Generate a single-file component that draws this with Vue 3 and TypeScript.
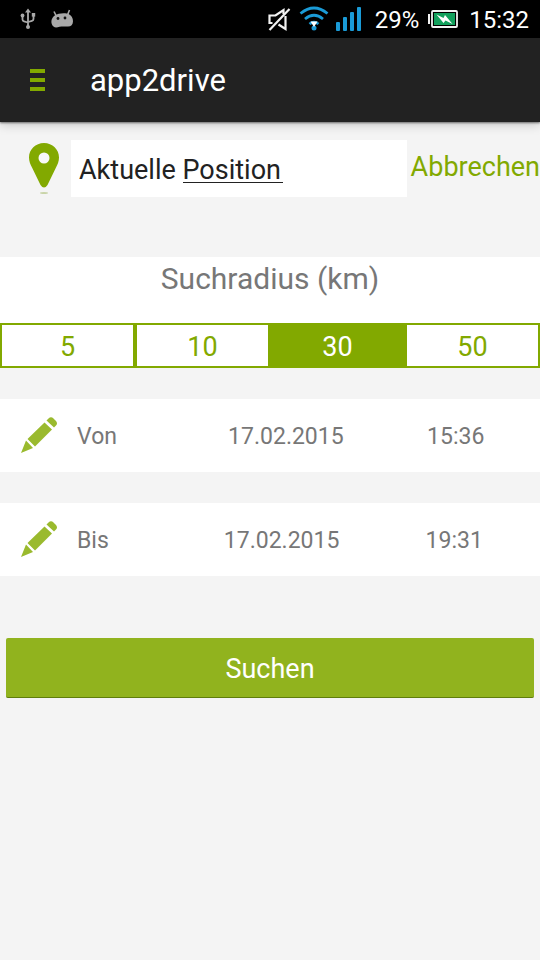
<script setup lang="ts">
import { ref } from 'vue'

interface Period {
  label: string
  date: string
  time: string
}

const address = ref('Aktuelle Position')
const radii: number[] = [5, 10, 30, 50]
const radius = ref(30)
const periods: Period[] = [
  { label: 'Von', date: '17.02.2015', time: '15:36' },
  { label: 'Bis', date: '17.02.2015', time: '19:31' },
]
</script>

<template>
  <div class="screen">
    <div class="status">
      <svg class="usb" width="16" height="22" viewBox="0 0 16 22" fill="none" stroke="#a9a9a9" stroke-width="1.8">
        <path d="M8 3v16M2.500 8v3.500q0 1.500 1.500 1.800l4 1.200M13.500 7v4q0 1.500-1.500 1.800L8 14" />
        <path d="M8 .5l3 4H5z" fill="#a9a9a9" stroke="none" />
        <circle cx="2.500" cy="7.500" r="1.900" fill="#a9a9a9" stroke="none" />
        <rect x="11.800" y="5" width="3.400" height="3.600" fill="#a9a9a9" stroke="none" />
        <circle cx="8" cy="19" r="2" fill="#a9a9a9" stroke="none" />
      </svg>
      <svg class="droid" width="24" height="20" viewBox="0 0 24 20">
        <path d="M4 2.500l2 4M19.500 1l-2 5" stroke="#a9a9a9" stroke-width="1.600" />
        <path d="M5 6.300C8 4 16 3.600 19 5.200c2.500 1.300 4 4 4 7 0 3.500-2 5.300-5 5.300-3.500 0-6-.3-8.500.3-2.500.7-4.500 1-6-.3C.5 15 .5 9.500 5 6.300z" fill="#a9a9a9" />
        <circle cx="8" cy="9.500" r="1.400" fill="#111" />
        <circle cx="15" cy="9" r="1.400" fill="#111" />
      </svg>
      <svg class="mute" width="24" height="26" viewBox="0 0 24 26" fill="none" stroke="#f2f2f2" stroke-width="2.200">
        <path d="M5.500 17H2.500V9.500h6l8-5.500v4M18.500 10v13l-7-4.500" />
        <path d="M22.500 3L2.500 24" />
      </svg>
      <svg class="wifi" width="30" height="26" viewBox="0 0 30 26" fill="none" stroke="#1a9bd7" stroke-width="2.800">
        <path d="M1.500 7.500Q15-3.500 28.500 7.500M6 13q9-7.500 18 0M10.500 18q4.500-3.500 9 0" />
        <circle cx="15" cy="22" r="2.500" fill="#1a9bd7" stroke="none" />
        <path d="M11.500 15.500h7L15 21z" fill="#fff" stroke="none" />
      </svg>
      <svg class="signal" width="26" height="24" viewBox="0 0 26 24" fill="#1a9bd7">
        <rect x="0" y="15" width="4" height="9" rx="1" />
        <rect x="7" y="10" width="4" height="14" rx="1" />
        <rect x="14" y="5" width="4" height="19" rx="1" />
        <rect x="21" y="0" width="4" height="24" rx="1" />
      </svg>
      <span class="percent">29%</span>
      <svg class="battery" width="30" height="18" viewBox="0 0 30 18">
        <rect x="0" y="4" width="2" height="10" fill="#f2f2f2" />
        <rect x="4" y="1" width="25" height="16" rx="1" fill="#000" stroke="#f2f2f2" stroke-width="1.800" />
        <rect x="6" y="3" width="21" height="12" fill="#12a05c" />
        <path d="M8.500 4.500l7 3.500 1.500-3 7.500 9-7-3.500-2 2.500z" fill="#fff" />
      </svg>
      <span class="clock">15:32</span>
    </div>

    <header class="bar">
      <button class="menu" type="button" aria-label="Menü">
        <svg width="15" height="22" viewBox="0 0 15 22" fill="#82a900">
          <path d="M0 0h15v4H0zM0 9h15v4H0zM0 18h15v4H0z" />
        </svg>
      </button>
      <h1>app2drive</h1>
    </header>

    <main>
      <div class="search">
        <svg class="pin" width="30" height="52" viewBox="0 0 30 52">
          <path d="M15 0C6.500 0 0 6.500 0 14.500c0 4 1.500 7 3 10l8.500 17.500q3.500 5 7 0L27 24.500c1.500-3 3-6 3-10C30 6.500 23.500 0 15 0z" fill="#82a900" />
          <circle cx="15" cy="15" r="5.500" fill="#f8f8f8" />
          <ellipse cx="15" cy="50" rx="4" ry="1" fill="#c9d4a8" />
        </svg>
        <input v-model="address" class="address" type="text" aria-label="Adresse" spellcheck="false" />
        <button class="cancel" type="button">Abbrechen</button>
      </div>

      <section class="radius">
        <h2>Suchradius (km)</h2>
        <div class="segments">
          <button
            v-for="km in radii"
            :key="km"
            type="button"
            :class="{ selected: km === radius }"
            :aria-pressed="km === radius"
            @click="radius = km"
          >{{ km }}</button>
        </div>
      </section>

      <section v-for="period in periods" :key="period.label" class="period">
        <button class="edit" type="button" :aria-label="period.label">
          <svg width="36" height="36" viewBox="0 0 36 36" fill="#9aba2e">
            <path d="M0 36l5-12.500 7 7.500zM6.500 22L23.500 5.500l7.500 7L14 29.500zM25.500 3.500l2-2q2.500-2.500 5 0l2.500 2.500q2 2.500 0 4.500l-2 2z" />
          </svg>
        </button>
        <span class="name">{{ period.label }}</span>
        <time>{{ period.date }}</time>
        <time>{{ period.time }}</time>
      </section>

      <button class="submit" type="button">Suchen</button>
    </main>
  </div>
</template>

<style>
body {
  background: #f4f4f4;
}
</style>

<style scoped>
.screen {
  min-height: 100vh;
  background: #f4f4f4;
  font-family: Roboto, "Liberation Sans", sans-serif;
  overflow-x: hidden;
}

button {
  padding: 0;
  border: 0;
  background: none;
  font-family: inherit;
  cursor: pointer;
}

svg {
  display: block;
  flex: none;
}

.status {
  display: flex;
  align-items: center;
  height: 38px;
  padding: 0 11px 0 20px;
  background: #000;
  color: #fff;
  font-size: 24px;
}

.droid {
  margin-left: 14px;
}

.mute {
  margin-left: auto;
}

.wifi {
  margin-left: 8px;
}

.signal {
  margin-left: 7px;
}

.percent {
  margin-left: 13px;
}

.percent,
.clock {
  padding-top: 2px;
}

.battery {
  margin: 0 11px 0 9px;
}

.bar {
  display: flex;
  align-items: center;
  height: 84px;
  padding-left: 30px;
  background: #222;
  box-shadow: 0 1px 2px rgba(0, 0, 0, 0.5), 0 3px 10px rgba(0, 0, 0, 0.18);
}

.bar h1 {
  margin: 0 0 0 45px;
  color: #fff;
  font-size: 31px;
  font-weight: 400;
}

.search {
  display: flex;
  align-items: center;
  padding: 18px 0 0 29px;
}

.address {
  flex: 1;
  min-width: 0;
  height: 57px;
  margin: 0 4px 0 12px;
  padding: 2px 8px 0;
  border: 0;
  outline: 0;
  background: linear-gradient(#222, #222) 112px 42px / 100px 1px no-repeat #fff;
  box-sizing: border-box;
  color: #222;
  font-family: inherit;
  font-size: 27px;
}

.cancel {
  padding-bottom: 3px;
  color: #82a900;
  font-size: 27px;
}

.radius {
  margin-top: 60px;
  background: #fff;
}

.radius h2 {
  margin: 0;
  padding-top: 4px;
  height: 62px;
  color: #777;
  font-size: 30px;
  font-weight: 400;
  line-height: 36px;
  text-align: center;
}

.segments {
  display: grid;
  grid-template-columns: repeat(4, 1fr);
}

.segments button {
  height: 45px;
  padding-top: 2px;
  border: 2px solid #82a900;
  background: #fff;
  color: #82a900;
  font-size: 27px;
}

.segments .selected {
  background: #82a900;
  color: #fff;
}

.period {
  display: flex;
  align-items: center;
  height: 73px;
  margin-top: 31px;
  padding: 0 14px 0 21px;
  background: #fff;
  color: #777;
  font-size: 23px;
}

.edit {
  margin-right: 20px;
  padding-bottom: 2px;
}

.name,
.period time {
  flex: 6 1 auto;
  padding-top: 2px;
}

.name {
  flex-grow: 5;
}

.period time {
  text-align: center;
}

.submit {
  display: block;
  width: calc(100% - 12px);
  height: 60px;
  margin: 62px 6px 0;
  padding-top: 2px;
  border-bottom: 1px solid #5f7d0c;
  border-radius: 2px;
  background: #91b31e;
  color: #fff;
  font-size: 27px;
}
</style>
